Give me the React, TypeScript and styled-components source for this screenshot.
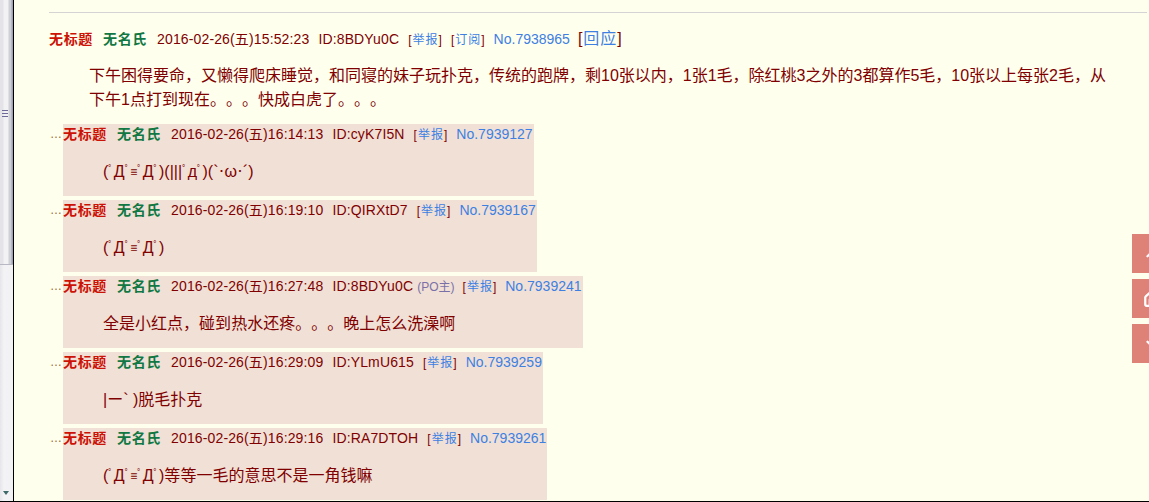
import React from "react";
import styled, { createGlobalStyle } from "styled-components";
import { ChevronUp, Home, ChevronDown } from "lucide-react";

const Global = createGlobalStyle`
  html, body { margin: 0; padding: 0; background: #ffffee; overflow: hidden; }
  body {
    font-family: "Liberation Sans", Arial, "Noto Sans CJK SC", sans-serif;
    text-spacing-trim: space-all;
  }
`;

const Frame = styled.div`
  display: flex;
  width: 1149px;
  height: 502px;
  box-sizing: border-box;
  border-bottom: 1px solid #000;
  overflow: hidden;
  position: relative;
`;

const LeftBar = styled.div`
  width: 13px;
  flex: none;
  background: linear-gradient(to right, #e6e6ea 0, #f3f2f5 4px, #f1f0f3 100%);
  border-right: 1px solid #000;
  display: flex;
  flex-direction: column;
`;

const Thumb = styled.div`
  height: 265px;
  box-sizing: border-box;
  padding-top: 110px;
  background: linear-gradient(to right, #e4e4e8 0, #e4e4e8 3px, #f2f2f4 4px, #f2f2f4 8px, #cfcfd6 9px, #cfcfd6 11px, #9fa0b8 12px);
  border-bottom: 1px solid #b8b8c4;
  display: flex;
  justify-content: center;
`;

const Grip = styled.div`
  width: 6px;
  height: 7px;
  margin-right: 3px;
  background: repeating-linear-gradient(to bottom, #6d6a9a 0, #6d6a9a 1px, transparent 1px, transparent 3px);
`;

const Track = styled.div`
  flex: 1;
  display: flex;
  align-items: flex-end;
  justify-content: center;
  padding-bottom: 6px;
`;

const Arrow = styled.div`
  width: 0;
  height: 0;
  margin-right: 2px;
  border-left: 3px solid transparent;
  border-right: 3px solid transparent;
  border-top: 4px solid #3c6a6a;
`;

const Main = styled.div`
  flex: 1;
  background: #ffffee;
  padding: 12px 2px 0 35px;
  overflow: hidden;
`;

const Rule = styled.div`
  height: 1px;
  background: #d4d4d4;
  margin-bottom: 16px;
`;

const Header = styled.div`
  display: flex;
  align-items: baseline;
  white-space: nowrap;
  height: 20px;
  line-height: 20px;
  font-size: 14px;
  color: #800000;
`;

const Title = styled.span`
  color: #cc1105;
  font-weight: bold;
  font-size: 14px;
  letter-spacing: 0.67px;
  margin-right: 10px;
`;

const Name = styled.span`
  color: #117743;
  font-weight: bold;
  font-size: 14px;
  letter-spacing: 0.67px;
  margin-right: 10px;
`;

const Meta = styled.span`
  letter-spacing: 0.14px;
  margin-right: 9px;
`;

const Po = styled.span`
  font-size: 12px;
  color: #7a70a8;
  margin: 0 8px 0 -5px;
`;

const Small = styled.span`
  font-size: 12px;
  color: #800000;
  letter-spacing: 1px;
  margin-right: 8px;
`;

const Link = styled.span<{ $big?: boolean }>`
  color: #3d80e2;
  font-size: ${(p) => (p.$big ? "16px" : "inherit")};
`;

const Num = styled.span`
  color: #3d80e2;
  margin-right: 8px;
`;

const Big = styled.span`
  font-size: 16px;
  color: #800000;
  letter-spacing: 1px;
`;

const ThreadBody = styled.div`
  margin: 15px 0 12px 40px;
  font-size: 16px;
  line-height: 24px;
  color: #800000;
  white-space: nowrap;
`;

const ReplyRow = styled.div`
  display: flex;
  align-items: flex-start;
  margin-bottom: 4px;
  margin-left: 1px;
`;

const Dots = styled.span`
  width: 13px;
  font-size: 12px;
  line-height: 20px;
  color: #9a6a30;
  letter-spacing: -1px;
`;

const ReplyBox = styled.div`
  background: #f0e0d6;
  padding: 0 1px 0 0;
  height: 72px;
  box-sizing: border-box;
`;

const ReplyBody = styled.div`
  margin: 16px 0 12px 40px;
  height: 24px;
  font-size: 16px;
  line-height: 24px;
  color: #800000;
  white-space: nowrap;
`;

const Shrink = styled.span<{ $size: number; $lift: number }>`
  font-size: ${(p) => p.$size}px;
  line-height: 1;
  vertical-align: ${(p) => p.$lift}px;
`;

const Floaters = styled.div`
  position: absolute;
  right: -23px;
  top: 234px;
  display: flex;
  flex-direction: column;
  gap: 6px;
`;

const FloatBtn = styled.div`
  width: 40px;
  height: 39px;
  background: #de8176;
  color: #fff;
  display: flex;
  align-items: center;
  justify-content: center;
`;

const small: Record<string, [number, number]> = {
  "ﾟ": [11, 3],
  "≡": [12, 1],
  "･": [12, 1],
};

function Kao({ text }: { text: string }) {
  return (
    <>
      {Array.from(text).map((ch, i) =>
        small[ch] !== undefined ? (
          <Shrink key={i} $size={small[ch][0]} $lift={small[ch][1]}>{ch}</Shrink>
        ) : (
          <React.Fragment key={i}>{ch}</React.Fragment>
        )
      )}
    </>
  );
}

type Reply = { time: string; id: string; po?: boolean; no: string; text: string };

const replies: Reply[] = [
  { time: "2016-02-26(五)16:14:13", id: "ID:cyK7I5N", no: "No.7939127", text: "(ﾟДﾟ≡ﾟДﾟ)(|||ﾟдﾟ)(`･ω･´)" },
  { time: "2016-02-26(五)16:19:10", id: "ID:QIRXtD7", no: "No.7939167", text: "(ﾟДﾟ≡ﾟДﾟ)" },
  { time: "2016-02-26(五)16:27:48", id: "ID:8BDYu0C", po: true, no: "No.7939241", text: "全是小红点，碰到热水还疼。。。晚上怎么洗澡啊" },
  { time: "2016-02-26(五)16:29:09", id: "ID:YLmU615", no: "No.7939259", text: "|ー` )脱毛扑克" },
  { time: "2016-02-26(五)16:29:16", id: "ID:RA7DTOH", no: "No.7939261", text: "(ﾟДﾟ≡ﾟДﾟ)等等一毛的意思不是一角钱嘛" },
];

export default function App() {
  return (
    <>
      <Global />
      <Frame>
        <LeftBar>
          <Thumb>
            <Grip />
          </Thumb>
          <Track>
            <Arrow />
          </Track>
        </LeftBar>
        <Main>
          <Rule />
          <Header>
            <Title>无标题</Title>
            <Name>无名氏</Name>
            <Meta>2016-02-26(五)15:52:23</Meta>
            <Meta>ID:8BDYu0C</Meta>
            <Small>[<Link>举报</Link>]</Small>
            <Small>[<Link>订阅</Link>]</Small>
            <Num>No.7938965</Num>
            <Big>[<Link $big>回应</Link>]</Big>
          </Header>
          <ThreadBody>
            下午困得要命，又懒得爬床睡觉，和同寝的妹子玩扑克，传统的跑牌，剩10张以内，1张1毛，除红桃3之外的3都算作5毛，10张以上每张2毛，从
            <br />
            下午1点打到现在。。。快成白虎了。。。
          </ThreadBody>
          {replies.map((r) => (
            <ReplyRow key={r.no}>
              <Dots>…</Dots>
              <ReplyBox>
                <Header>
                  <Title>无标题</Title>
                  <Name>无名氏</Name>
                  <Meta>{r.time}</Meta>
                  <Meta>{r.id}</Meta>
                  {r.po && <Po>(PO主)</Po>}
                  <Small>[<Link>举报</Link>]</Small>
                  <Link>{r.no}</Link>
                </Header>
                <ReplyBody>
                  <Kao text={r.text} />
                </ReplyBody>
              </ReplyBox>
            </ReplyRow>
          ))}
        </Main>
        <Floaters>
          <FloatBtn><ChevronUp size={18} strokeWidth={3} /></FloatBtn>
          <FloatBtn><Home size={18} strokeWidth={3} /></FloatBtn>
          <FloatBtn><ChevronDown size={18} strokeWidth={3} /></FloatBtn>
        </Floaters>
      </Frame>
    </>
  );
}
